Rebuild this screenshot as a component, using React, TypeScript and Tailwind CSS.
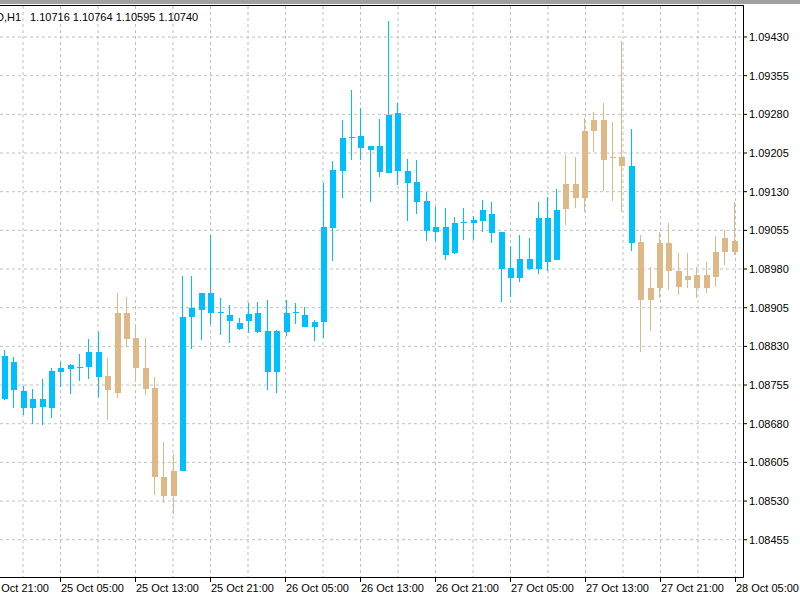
const BLUE = "#00bfff";
const TAN = "#deb887";

// [x, high, bodyTop, bodyBottom, low, up?]
const candles: [number, number, number, number, number, boolean][] = [
  [4, 350, 356, 399, 400, true], [13, 357, 362, 390, 408, true], [23, 386, 391, 408, 415, true],
  [32, 389, 399, 408, 424, true], [42, 379, 399, 407, 425, true], [51, 368, 371, 408, 418, true],
  [60, 362, 368, 372, 387, true], [70, 364, 365, 369, 394, true], [79, 354, 367, 367, 381, true],
  [88, 339, 352, 367, 379, true], [98, 332, 352, 377, 397, true], [107, 358, 376, 390, 420, false],
  [117, 293, 313, 393, 398, false], [126, 297, 313, 339, 347, false], [135, 327, 338, 368, 382, false],
  [145, 338, 368, 389, 395, false], [154, 377, 388, 477, 495, false], [163, 442, 477, 496, 503, false],
  [173, 454, 471, 496, 514, false], [182, 276, 317, 471, 471, true], [191, 276, 308, 317, 349, true],
  [201, 293, 293, 310, 340, true], [210, 235, 293, 313, 324, true], [220, 298, 312, 313, 335, true],
  [229, 305, 315, 321, 343, true], [239, 318, 323, 329, 330, true], [248, 303, 314, 321, 333, true],
  [257, 302, 313, 332, 333, true], [267, 300, 331, 372, 390, true], [276, 330, 331, 372, 393, true],
  [286, 300, 313, 332, 336, true], [295, 303, 312, 313, 324, true], [304, 307, 315, 327, 327, true],
  [314, 320, 322, 327, 341, true], [323, 183, 227, 322, 338, true], [332, 161, 170, 228, 261, true],
  [342, 120, 138, 171, 198, true], [351, 90, 137, 138, 160, true], [360, 108, 136, 148, 160, true],
  [370, 147, 146, 150, 202, true], [379, 119, 146, 172, 177, true], [388, 21, 115, 173, 173, true],
  [397, 103, 113, 171, 185, true], [407, 159, 171, 183, 221, true], [416, 160, 182, 202, 214, true],
  [426, 192, 201, 231, 241, true], [435, 207, 227, 232, 241, true], [445, 208, 227, 255, 260, true],
  [454, 217, 223, 253, 254, true], [463, 208, 222, 223, 240, true], [473, 216, 220, 223, 240, true],
  [482, 200, 210, 221, 232, true], [491, 202, 214, 233, 243, true], [501, 232, 232, 269, 302, true],
  [510, 246, 268, 278, 297, true], [519, 235, 259, 278, 282, true], [529, 238, 259, 269, 270, true],
  [538, 202, 218, 269, 274, true], [547, 197, 218, 262, 271, true], [556, 189, 210, 260, 260, true],
  [565, 155, 184, 209, 225, false], [575, 157, 184, 198, 208, false], [584, 118, 131, 198, 212, false],
  [593, 112, 120, 131, 152, false], [603, 103, 120, 160, 191, false], [612, 122, 157, 158, 201, false],
  [621, 41, 157, 166, 212, false], [631, 129, 166, 243, 251, true], [640, 235, 242, 300, 352, false],
  [650, 267, 288, 300, 331, false], [659, 232, 243, 288, 298, false], [668, 223, 243, 271, 290, false],
  [678, 253, 271, 287, 295, false], [687, 253, 276, 280, 288, false], [696, 267, 275, 288, 298, false],
  [706, 262, 275, 288, 293, false], [715, 236, 252, 277, 287, false], [724, 230, 238, 252, 265, false],
  [734, 202, 241, 252, 255, false],
];

const prices = ["1.09430", "1.09355", "1.09280", "1.09205", "1.09130", "1.09055", "1.08980", "1.08905", "1.08830", "1.08755", "1.08680", "1.08605", "1.08530", "1.08455"];
const times = ["24 Oct 21:00", "25 Oct 05:00", "25 Oct 13:00", "25 Oct 21:00", "26 Oct 05:00", "26 Oct 13:00", "26 Oct 21:00", "27 Oct 05:00", "27 Oct 13:00", "27 Oct 21:00", "28 Oct 05:00"];

export default function App() {
  const hy = prices.map((_, i) => 37 + i * 38.67);
  const vx = Array.from({ length: 20 }, (_, i) => 23 + i * 37.5);
  return (
    <div className="w-[800px] h-[600px] bg-white overflow-hidden" style={{ fontFamily: '"Liberation Sans", Arial, sans-serif' }}>
      <svg width="800" height="600" className="block">
        <rect x="0" y="0" width="800" height="4" fill="#a0a0a0" />
        {hy.map((y) => (
          <line key={y} x1="0" x2="743" y1={y} y2={y} stroke="#c0c0c0" strokeDasharray="3 3" />
        ))}
        {vx.map((x) => (
          <line key={x} x1={x} x2={x} y1="6" y2="577" stroke="#c0c0c0" strokeDasharray="3 3" />
        ))}
        {candles.map(([x, h, t, b, l, up]) => {
          const c = up ? BLUE : TAN;
          return (
            <g key={x}>
              <line x1={x + 0.5} x2={x + 0.5} y1={h} y2={l} stroke={c} />
              <rect x={x - 2} y={t} width="6" height={Math.max(b - t, 1)} fill={c} />
            </g>
          );
        })}
        <line x1="0" x2="743.5" y1="5.5" y2="5.5" stroke="#000" />
        <line x1="743.5" x2="743.5" y1="5" y2="577.5" stroke="#000" />
        <line x1="0" x2="743.5" y1="577.5" y2="577.5" stroke="#000" />
        {hy.map((y, i) => (
          <g key={prices[i]}>
            <line x1="743" x2="747" y1={y} y2={y} stroke="#000" />
            <text x="749" y={y + 4} fontSize="11" fill="#000">{prices[i]}</text>
          </g>
        ))}
        {times.map((t, i) => {
          const x = -15 + i * 75;
          return (
            <g key={t}>
              <line x1={x + 0.5} x2={x + 0.5} y1="577" y2="582" stroke="#000" />
              <text x={x + 1} y="592" fontSize="11" fill="#000">{t}</text>
            </g>
          );
        })}
        <text x="-4" y="21" fontSize="11" fill="#000">D,H1</text>
        <text x="30" y="21" fontSize="11" fill="#000">1.10716 1.10764 1.10595 1.10740</text>
      </svg>
    </div>
  );
}
